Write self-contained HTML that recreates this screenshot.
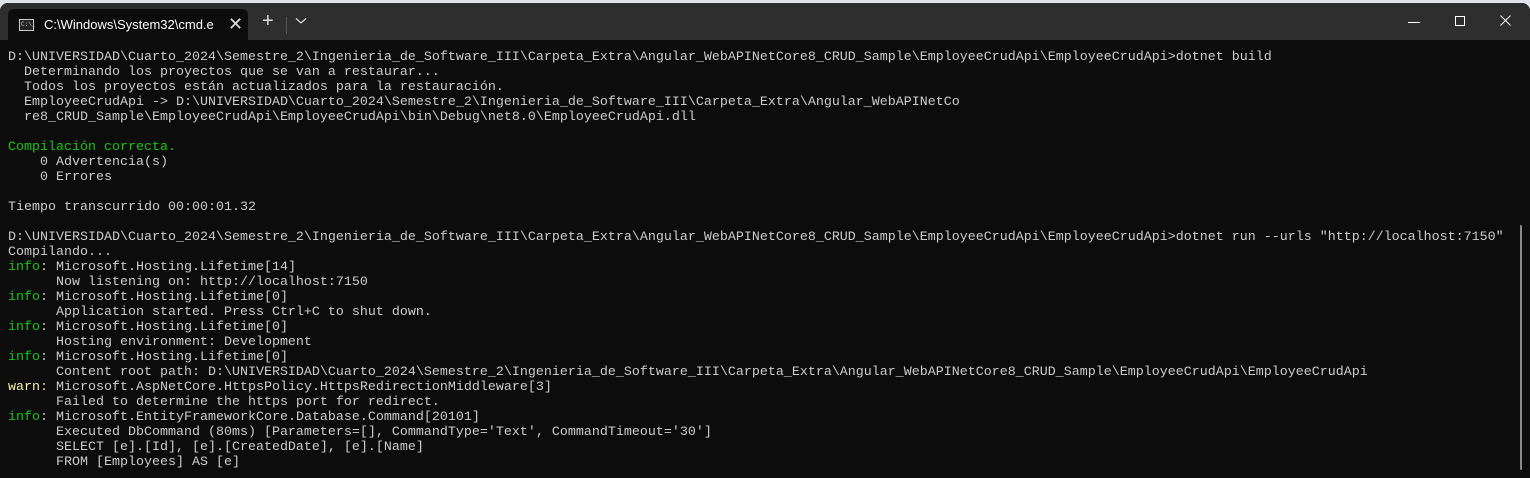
<!DOCTYPE html>
<html><head><meta charset="utf-8"><style>
html,body{margin:0;padding:0;width:1530px;height:478px;overflow:hidden;background:#dfe3ea;}
.win{position:absolute;left:0;top:3px;width:1530px;height:475px;background:#0c0c0c;border-radius:8px 8px 0 0;overflow:hidden;}
.bar{position:absolute;left:0;top:0;width:1530px;height:37px;background:#2e2e2e;}
.tab{position:absolute;left:8px;top:6px;width:240px;height:31px;background:#0c0c0c;border-radius:6px 6px 0 0;}
.tab .t{position:absolute;left:36px;top:8px;font:13px "Liberation Sans",sans-serif;color:#fff;}
.icon{position:absolute;left:11px;top:10px;width:13px;height:10px;border:1px solid #ccc;background:#222;}
.icon:after{content:"C:\\_";position:absolute;left:1px;top:1px;font:6px "Liberation Mono",monospace;color:#ccc;}
.x{position:absolute;left:220px;top:5px;color:#ddd;font:18px "Liberation Sans",sans-serif;}
.plus{position:absolute;left:262px;top:8px;color:#ddd;font:20px "Liberation Sans",sans-serif;line-height:20px;}
.sep{position:absolute;left:286px;top:14px;width:1px;height:17px;background:#555;}
.chev{position:absolute;left:295px;top:14px;}
pre{position:absolute;left:8px;top:47px;margin:0;font:13.33px/15px "Liberation Mono",monospace;color:#cccccc;white-space:pre;}
.g{color:#16c60c}.y{color:#f9f1a5}
.sb{position:absolute;left:1520px;top:222px;width:2px;height:245px;background:#8a8a8a;border-radius:1px;}
</style></head><body>
<div class="win">
<div class="bar"></div>
<div class="tab"><div class="icon"></div><div class="t">C:\Windows\System32\cmd.e</div><div class="x">✕</div></div>
<div class="plus">+</div><div class="sep"></div>
<svg class="chev" width="12" height="8"><path d="M1 1.5 L6 6 L11 1.5" stroke="#ddd" fill="none" stroke-width="1.2"/></svg>
<svg style="position:absolute;left:1408px;top:19px" width="14" height="2"><rect width="12" height="1" fill="#fff"/></svg>
<svg style="position:absolute;left:1455px;top:13px" width="12" height="12"><rect x="0.5" y="0.5" width="9" height="9" fill="none" stroke="#fff" stroke-width="1"/></svg>
<svg style="position:absolute;left:1500px;top:12px" width="12" height="12"><path d="M0.5 0.5 L10.5 10.5 M10.5 0.5 L0.5 10.5" stroke="#fff" stroke-width="1"/></svg>
<pre>D:\UNIVERSIDAD\Cuarto_2024\Semestre_2\Ingenieria_de_Software_III\Carpeta_Extra\Angular_WebAPINetCore8_CRUD_Sample\EmployeeCrudApi\EmployeeCrudApi>dotnet build
  Determinando los proyectos que se van a restaurar...
  Todos los proyectos están actualizados para la restauración.
  EmployeeCrudApi -> D:\UNIVERSIDAD\Cuarto_2024\Semestre_2\Ingenieria_de_Software_III\Carpeta_Extra\Angular_WebAPINetCo
  re8_CRUD_Sample\EmployeeCrudApi\EmployeeCrudApi\bin\Debug\net8.0\EmployeeCrudApi.dll

<span class="g">Compilación correcta.</span>
    0 Advertencia(s)
    0 Errores

Tiempo transcurrido 00:00:01.32

D:\UNIVERSIDAD\Cuarto_2024\Semestre_2\Ingenieria_de_Software_III\Carpeta_Extra\Angular_WebAPINetCore8_CRUD_Sample\EmployeeCrudApi\EmployeeCrudApi>dotnet run --urls "http://localhost:7150"
Compilando...
<span class="g">info</span>: Microsoft.Hosting.Lifetime[14]
      Now listening on: http://localhost:7150
<span class="g">info</span>: Microsoft.Hosting.Lifetime[0]
      Application started. Press Ctrl+C to shut down.
<span class="g">info</span>: Microsoft.Hosting.Lifetime[0]
      Hosting environment: Development
<span class="g">info</span>: Microsoft.Hosting.Lifetime[0]
      Content root path: D:\UNIVERSIDAD\Cuarto_2024\Semestre_2\Ingenieria_de_Software_III\Carpeta_Extra\Angular_WebAPINetCore8_CRUD_Sample\EmployeeCrudApi\EmployeeCrudApi
<span class="y">warn</span>: Microsoft.AspNetCore.HttpsPolicy.HttpsRedirectionMiddleware[3]
      Failed to determine the https port for redirect.
<span class="g">info</span>: Microsoft.EntityFrameworkCore.Database.Command[20101]
      Executed DbCommand (80ms) [Parameters=[], CommandType='Text', CommandTimeout='30']
      SELECT [e].[Id], [e].[CreatedDate], [e].[Name]
      FROM [Employees] AS [e]</pre>
<div class="sb"></div>
</div>
</body></html>
